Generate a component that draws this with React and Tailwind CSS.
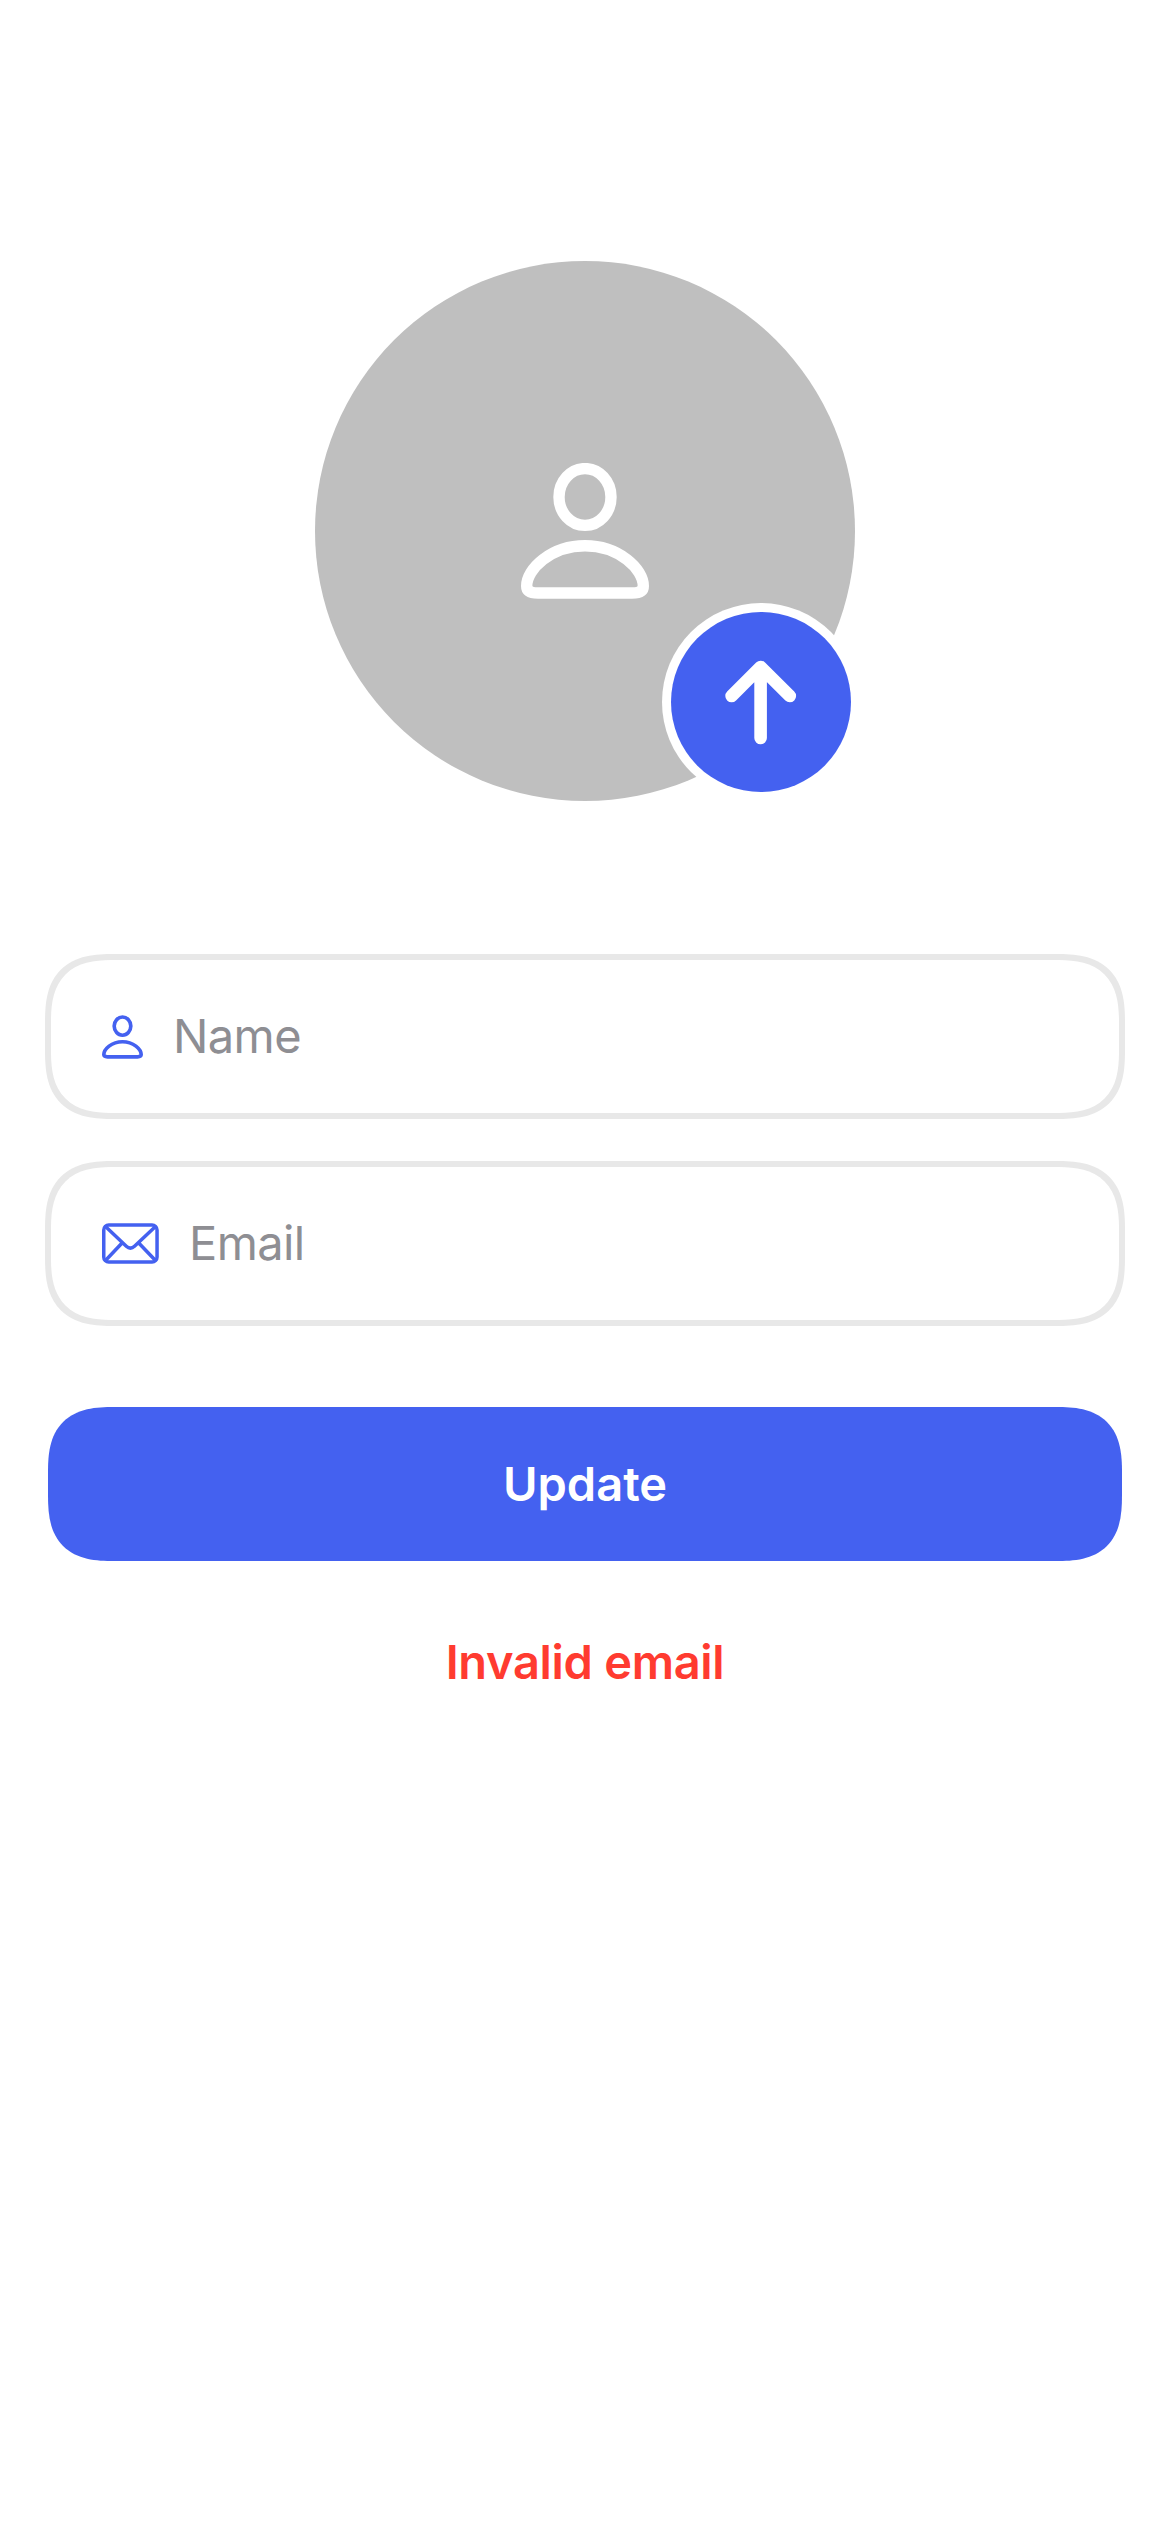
function PersonIcon({ className }) {
  return (
    <svg viewBox="0 0 128 136" fill="none" stroke="currentColor" strokeWidth="11.4" className={className}>
      <ellipse cx="64" cy="34" rx="26" ry="28.4" />
      <path d="M17 130h94c7 0 11.300-2 11.300-7C122.300 106 98 82.800 64 82.800S5.700 106 5.700 123c0 5 4.300 7 11.300 7Z" />
    </svg>
  );
}

function EnvelopeIcon({ className }) {
  return (
    <svg viewBox="0 0 57 41" fill="none" stroke="currentColor" strokeWidth="3.5" className={className}>
      <rect x="1.750" y="1.950" width="53.300" height="37" rx="5" />
      <path d="M3.500 3.500 24.300 23.200Q28.400 27 32.500 23.200L53.500 3.500M3.500 37.500 20.300 19.700M53.500 37.500 36.500 19.700" />
    </svg>
  );
}

function Field({ icon, label }) {
  return (
    <label className="flex h-[165px] w-full items-center gap-[30px] rounded-[69px] border-6 border-[#e8e8e8] pl-[51px] [corner-shape:superellipse(1.42)]">
      {icon}
      <input
        type="text"
        placeholder={label}
        className="h-16 min-w-0 flex-1 bg-transparent text-[47px] tracking-[-0.6px] outline-none placeholder:text-[#8e8e93] placeholder:opacity-100"
      />
    </label>
  );
}

export default function App() {
  return (
    <main className="flex min-h-[2532px] w-full flex-col items-center bg-white px-[45px] pt-[261px] font-['Inter',sans-serif]">
      <div className="relative flex size-[540px] items-center justify-center rounded-full bg-[#bfbfbf]">
        <PersonIcon className="h-[136px] w-32 text-white" />
        <button className="absolute right-[-5px] bottom-0 flex size-[198px] items-center justify-center rounded-full bg-white">
          <span className="flex size-[180px] items-center justify-center rounded-full bg-[#4461f0]">
            <svg viewBox="0 0 72 86" fill="none" stroke="white" strokeWidth="12.6" strokeLinecap="round" strokeLinejoin="round" className="h-[86px] w-[72px]">
              <path d="M35.600 9v70M6.600 37 35.600 8 64.800 37" />
            </svg>
          </span>
        </button>
      </div>

      <form className="mt-[153px] flex w-full flex-col" onSubmit={(e) => e.preventDefault()}>
        <div className="flex flex-col gap-[42px]">
          <Field label="Name" icon={<PersonIcon className="h-11 w-[41px] shrink-0 text-[#4461f0]" />} />
          <Field label="Email" icon={<EnvelopeIcon className="h-[41px] w-[57px] shrink-0 text-[#4461f0]" />} />
        </div>
        <button className="mx-[3px] mt-[81px] h-[154px] rounded-[66px] bg-[#4461f0] text-[47px] font-semibold text-white [corner-shape:superellipse(1.42)]">
          Update
        </button>
        <p className="mt-[71px] text-center text-[47px] leading-[60px] font-semibold tracking-[-0.3px] text-[#ff3b30]">
          Invalid email
        </p>
      </form>
    </main>
  );
}
